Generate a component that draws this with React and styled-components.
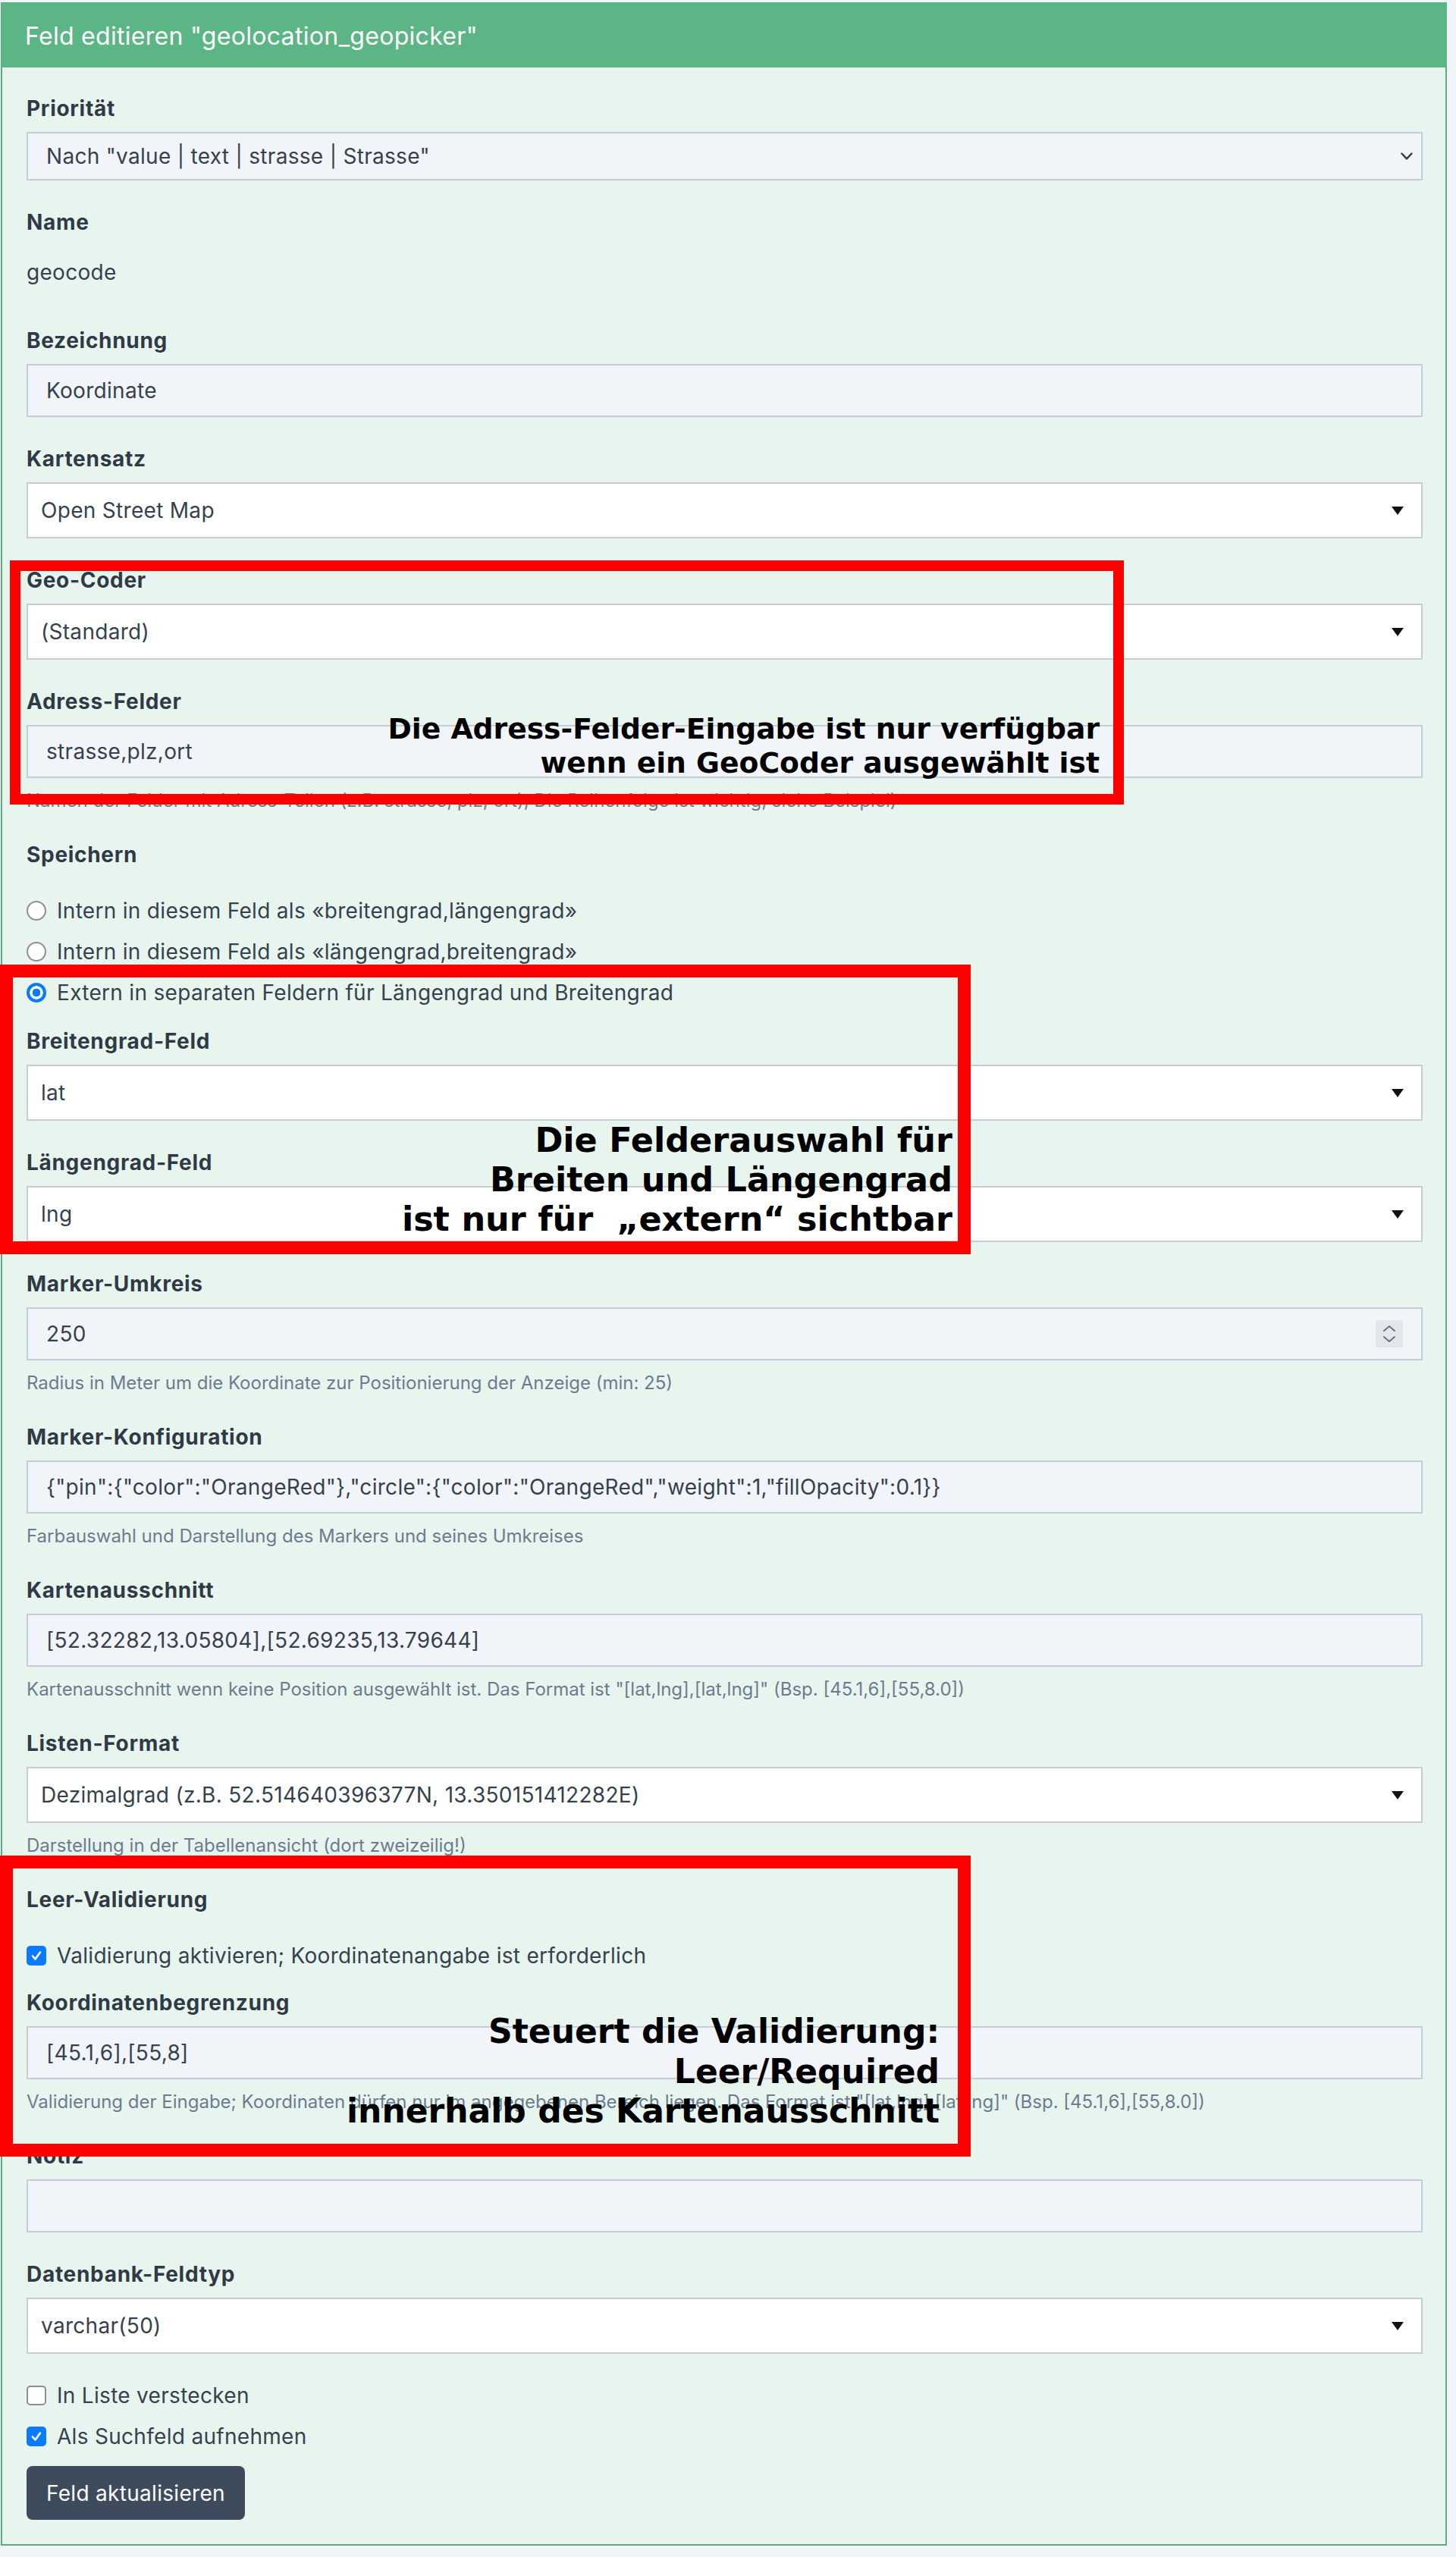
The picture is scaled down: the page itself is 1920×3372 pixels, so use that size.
import React from "react";
import styled, { createGlobalStyle } from "styled-components";

const GlobalStyle = createGlobalStyle`
  html, body { margin: 0; padding: 0; background: #f1f5f9; }
  body {
    font-family: Inter, "Noto Sans", "Liberation Sans", sans-serif;
    color: #36414e;
  }
  * { box-sizing: border-box; }
`;

const Page = styled.div`
  padding: 3px 12px 15px 1px;
`;

const Panel = styled.section`
  border: 2px solid #5dab80;
  border-top: 0;
  background: #e8f5ee;
`;

const PanelHeader = styled.header`
  height: 86px;
  background: #5cb585;
  color: #ffffff;
  display: flex;
  align-items: center;
  padding: 3px 32px 0;
  margin: 0 -2px;
  font-size: 32px;
  letter-spacing: 0.3px;
  font-weight: 400;
`;

const PanelBody = styled.div`
  padding: 33px 30px 32px 32px;
`;

const Group = styled.div`
  margin-bottom: 34px;
`;

const Label = styled.label`
  display: block;
  font-size: 28px;
  line-height: 42px;
  font-weight: 700;
  letter-spacing: 0.7px;
  color: #2f3a46;
  margin-bottom: 10px;
`;

const StaticText = styled.div`
  font-size: 28px;
  line-height: 42px;
  letter-spacing: 0.3px;
  padding: 14px 0;
  color: #36414e;
`;

const TextInput = styled.input`
  display: block;
  width: 100%;
  height: 70px;
  border: 2px solid #c6cdd6;
  background: #f1f5f9;
  padding: 0 24px;
  font-family: inherit;
  font-size: 28px;
  letter-spacing: 0.3px;
  color: #36414e;
  outline: none;
`;

const NumberBox = styled.div`
  display: flex;
  align-items: center;
  height: 70px;
  border: 2px solid #c6cdd6;
  background: #f1f5f9;
  padding: 0 24px;
`;

const BareInput = styled.input`
  flex: 1;
  min-width: 0;
  border: 0;
  background: transparent;
  padding: 0;
  font-family: inherit;
  font-size: 28px;
  letter-spacing: 0.3px;
  color: #36414e;
  outline: none;
`;

const Spinner = styled.span`
  flex: none;
  width: 36px;
  height: 36px;
  border-radius: 3px;
  background: #e3e6eb;
  display: flex;
  align-items: center;
  justify-content: center;
`;

const SelectBox = styled.div`
  display: flex;
  align-items: center;
  height: ${(p) => (p.$soft ? "64px" : "74px")};
  border: 2px solid #c6cdd6;
  background: ${(p) => (p.$soft ? "#f1f5f9" : "#ffffff")};
  padding: ${(p) => (p.$soft ? "0 11px 0 24px" : "0 23px 0 17px")};
`;

const NativeSelect = styled.select`
  flex: 1;
  min-width: 0;
  height: 100%;
  appearance: none;
  -webkit-appearance: none;
  border: 0;
  background: transparent;
  padding: 0;
  font-family: inherit;
  font-size: 28px;
  letter-spacing: 0.3px;
  color: #36414e;
  outline: none;
`;

const Help = styled.div`
  font-size: 24px;
  line-height: 33px;
  margin-top: 13px;
  color: #6b7c90;
  white-space: nowrap;
`;

const ChoiceList = styled.div`
  display: flex;
  flex-direction: column;
  gap: 12px;
  padding-top: ${(p) => p.$top || 0}px;
  margin-bottom: ${(p) => p.$bottom || 0}px;
`;

const ChoiceRow = styled.div`
  display: flex;
  align-items: center;
  gap: 14px;
  height: 42px;
  font-size: 28px;
  line-height: 42px;
  letter-spacing: 0.3px;
  color: #36414e;
`;

const RadioMark = styled.span`
  flex: none;
  width: 26px;
  height: 26px;
  border-radius: 50%;
  ${(p) =>
    p.$checked
      ? `background: radial-gradient(circle, #0a7aff 0 5px, #ffffff 5.6px 8.4px, #0a7aff 9px);`
      : `background: #ffffff; border: 2.5px solid #8e8e93;`}
`;

const CheckMark = styled.span`
  flex: none;
  width: 26px;
  height: 26px;
  border-radius: 5px;
  display: flex;
  align-items: center;
  justify-content: center;
  ${(p) =>
    p.$checked
      ? `background: #0a7aff;`
      : `background: #ffffff; border: 2.5px solid #8e8e93;`}
`;

const SubmitButton = styled.button`
  display: inline-flex;
  align-items: center;
  height: 71px;
  padding: 0 26px;
  border: 0;
  border-radius: 8px;
  background: #3d4b5c;
  color: #ffffff;
  font-family: inherit;
  font-size: 28px;
  letter-spacing: 0.3px;
`;

const Zone = styled.div`
  position: relative;
`;

const RedFrame = styled.div`
  position: absolute;
  z-index: 2;
  pointer-events: none;
  top: ${(p) => p.$top}px;
  left: ${(p) => p.$left}px;
  width: ${(p) => p.$width}px;
  height: ${(p) => p.$height}px;
  border: ${(p) => p.$line}px solid #ff0000;
`;

const Note = styled.div`
  position: absolute;
  z-index: 3;
  top: ${(p) => p.$top}px;
  right: ${(p) => p.$right}px;
  font-family: "DejaVu Sans", Verdana, sans-serif;
  font-weight: 700;
  font-size: ${(p) => p.$size}px;
  line-height: ${(p) => p.$lh}px;
  color: #000000;
  text-align: right;
  white-space: pre;
`;

const NoteLine = styled.span`
  display: block;
`;

const Chevron = () => (
  <svg width="16" height="10" viewBox="0 0 16 10">
    <polyline points="1.5,1.5 8,8.3 14.5,1.5" fill="none" stroke="#343a40" strokeWidth="2.4" strokeLinecap="round" strokeLinejoin="round" />
  </svg>
);

const Triangle = () => (
  <svg width="16" height="11" viewBox="0 0 16 11">
    <polygon points="0,0 16,0 8,11" fill="#111111" />
  </svg>
);

const SpinIcon = () => (
  <svg width="18" height="26" viewBox="0 0 18 26">
    <polyline points="2,9 9,3 16,9" fill="none" stroke="#6b7280" strokeWidth="2" strokeLinecap="round" strokeLinejoin="round" />
    <polyline points="2,17 9,23 16,17" fill="none" stroke="#6b7280" strokeWidth="2" strokeLinecap="round" strokeLinejoin="round" />
  </svg>
);

const Tick = () => (
  <svg width="16" height="16" viewBox="0 0 16 16">
    <polyline points="3,8.5 6.5,12.5 13,3.5" fill="none" stroke="#ffffff" strokeWidth="2.6" strokeLinecap="round" strokeLinejoin="round" />
  </svg>
);

const Select = ({ value, soft }) => (
  <SelectBox $soft={soft}>
    <NativeSelect defaultValue={value}>
      <option value={value}>{value}</option>
    </NativeSelect>
    {soft ? <Chevron /> : <Triangle />}
  </SelectBox>
);

const Radio = ({ checked, children }) => (
  <ChoiceRow>
    <RadioMark $checked={checked} />
    <span>{children}</span>
  </ChoiceRow>
);

const Check = ({ checked, children }) => (
  <ChoiceRow>
    <CheckMark $checked={checked}>{checked ? <Tick /> : null}</CheckMark>
    <span>{children}</span>
  </ChoiceRow>
);

export default function App() {
  return (
    <>
      <GlobalStyle />
      <Page>
        <Panel>
          <PanelHeader>Feld editieren "geolocation_geopicker"</PanelHeader>
          <PanelBody>
            <Group>
              <Label>Priorität</Label>
              <Select soft value={'Nach "value | text | strasse | Strasse"'} />
            </Group>

            <Group>
              <Label>Name</Label>
              <StaticText>geocode</StaticText>
            </Group>

            <Group>
              <Label>Bezeichnung</Label>
              <TextInput defaultValue="Koordinate" />
            </Group>

            <Group>
              <Label>Kartensatz</Label>
              <Select value="Open Street Map" />
            </Group>

            <Zone>
              <RedFrame $top={-5} $left={-22} $width={1469} $height={322} $line={14} />
              <Note $top={195} $right={426} $size={37.7} $lh={45}>
                <NoteLine>Die Adress-Felder-Eingabe ist nur verfügbar</NoteLine>
                <NoteLine>wenn ein GeoCoder ausgewählt ist</NoteLine>
              </Note>
              <Group>
                <Label>Geo-Coder</Label>
                <Select value="(Standard)" />
              </Group>
              <Group>
                <Label>Adress-Felder</Label>
                <TextInput defaultValue="strasse,plz,ort" />
                <Help>Namen der Felder mit Adress-Teilen (z.B. strasse, plz, ort), Die Reihenfolge ist wichtig, siehe Beispiel)</Help>
              </Group>
            </Zone>

            <Label>Speichern</Label>
            <ChoiceList $top={22} $bottom={12}>
              <Radio>Intern in diesem Feld als «breitengrad,längengrad»</Radio>
              <Radio>Intern in diesem Feld als «längengrad,breitengrad»</Radio>
            </ChoiceList>

            <Zone>
              <RedFrame $top={-16} $left={-35} $width={1280} $height={382} $line={17} />
              <Note $top={190} $right={620} $size={44.5} $lh={52}>
                <NoteLine>Die Felderauswahl für</NoteLine>
                <NoteLine>Breiten und Längengrad</NoteLine>
                <NoteLine>ist nur für  „extern“ sichtbar</NoteLine>
              </Note>
              <ChoiceList $bottom={22}>
                <Radio checked>Extern in separaten Feldern für Längengrad und Breitengrad</Radio>
              </ChoiceList>
              <Group>
                <Label>Breitengrad-Feld</Label>
                <Select value="lat" />
              </Group>
              <Group>
                <Label>Längengrad-Feld</Label>
                <Select value="lng" />
              </Group>
            </Zone>

            <Group>
              <Label>Marker-Umkreis</Label>
              <NumberBox>
                <BareInput defaultValue="250" />
                <Spinner>
                  <SpinIcon />
                </Spinner>
              </NumberBox>
              <Help>Radius in Meter um die Koordinate zur Positionierung der Anzeige (min: 25)</Help>
            </Group>

            <Group>
              <Label>Marker-Konfiguration</Label>
              <TextInput defaultValue={'{"pin":{"color":"OrangeRed"},"circle":{"color":"OrangeRed","weight":1,"fillOpacity":0.1}}'} />
              <Help>Farbauswahl und Darstellung des Markers und seines Umkreises</Help>
            </Group>

            <Group>
              <Label>Kartenausschnitt</Label>
              <TextInput defaultValue="[52.32282,13.05804],[52.69235,13.79644]" />
              <Help>Kartenausschnitt wenn keine Position ausgewählt ist. Das Format ist "[lat,lng],[lat,lng]" (Bsp. [45.1,6],[55,8.0])</Help>
            </Group>

            <Group>
              <Label>Listen-Format</Label>
              <Select value="Dezimalgrad (z.B. 52.514640396377N, 13.350151412282E)" />
              <Help>Darstellung in der Tabellenansicht (dort zweizeilig!)</Help>
            </Group>

            <Zone>
              <RedFrame $top={-37} $left={-35} $width={1280} $height={397} $line={17} />
              <Note $top={169} $right={637} $size={44} $lh={52.5}>
                <NoteLine>Steuert die Validierung:</NoteLine>
                <NoteLine>Leer/Required</NoteLine>
                <NoteLine>innerhalb des Kartenausschnitt</NoteLine>
              </Note>
              <Label>Leer-Validierung</Label>
              <ChoiceList $top={22} $bottom={20}>
                <Check checked>Validierung aktivieren; Koordinatenangabe ist erforderlich</Check>
              </ChoiceList>
              <Group>
                <Label>Koordinatenbegrenzung</Label>
                <TextInput defaultValue="[45.1,6],[55,8]" />
                <Help>Validierung der Eingabe; Koordinaten dürfen nur im angegebenen Bereich liegen. Das Format ist "[lat,lng],[lat,lng]" (Bsp. [45.1,6],[55,8.0])</Help>
              </Group>
            </Zone>

            <Group>
              <Label>Notiz</Label>
              <TextInput defaultValue="" />
            </Group>

            <Group>
              <Label>Datenbank-Feldtyp</Label>
              <Select value="varchar(50)" />
            </Group>

            <ChoiceList $bottom={18}>
              <Check>In Liste verstecken</Check>
              <Check checked>Als Suchfeld aufnehmen</Check>
            </ChoiceList>

            <SubmitButton type="button">Feld aktualisieren</SubmitButton>
          </PanelBody>
        </Panel>
      </Page>
    </>
  );
}
